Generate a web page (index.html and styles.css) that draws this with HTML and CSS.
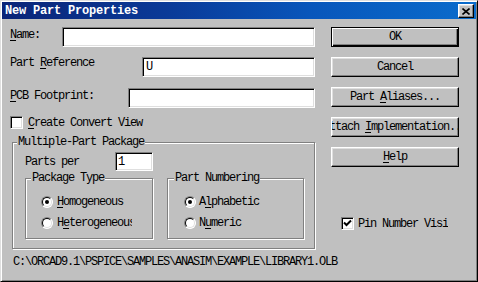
FILE: index.html
```html
<!DOCTYPE html>
<html>
<head>
<meta charset="utf-8">
<link rel="stylesheet" href="styles.css">
</head>
<body>
<div class="window">
  <div class="titlebar">
    <span class="title">New Part Properties</span>
    <span class="close"><svg width="8" height="7" viewBox="0 0 8 7"><path d="M0.5 0.5L7.5 6.5M7.5 0.5L0.5 6.5" stroke="#000" stroke-width="1.6" fill="none"/></svg></span>
  </div>
  <div class="body">
    <div class="left">
      <div class="field">
        <span class="lbl w-name"><u>N</u>ame:</span>
        <div class="input"></div>
      </div>
      <div class="field f-ref">
        <span class="lbl w-ref">Part <u>R</u>eference</span>
        <div class="input">U</div>
      </div>
      <div class="field f-pcb">
        <span class="lbl w-pcb"><u>P</u>CB Footprint:</span>
        <div class="input"></div>
      </div>
      <div class="check-row convert">
        <span class="checkbox"></span>
        <span><u>C</u>reate Convert View</span>
      </div>
      <fieldset class="group outer">
        <legend>Multiple-Part Package</legend>
        <div class="parts-row">
          <span class="lbl w-parts">Parts per</span>
          <div class="input small">1</div>
        </div>
        <div class="subgroups">
          <fieldset class="group sub pkg">
            <legend>Package Type</legend>
            <div class="radio-row first"><span class="radio on"></span><span><u>H</u>omogeneous</span></div>
            <div class="radio-row second"><span class="radio"></span><span class="clip-het">H<u>e</u>terogeneous</span></div>
          </fieldset>
          <fieldset class="group sub num">
            <legend>Part Numbering</legend>
            <div class="radio-row first"><span class="radio on"></span><span>A<u>l</u>phabetic</span></div>
            <div class="radio-row second"><span class="radio"></span><span>N<u>u</u>meric</span></div>
          </fieldset>
        </div>
      </fieldset>
      <div class="path">C:\ORCAD9.1\PSPICE\SAMPLES\ANASIM\EXAMPLE\LIBRARY1.OLB</div>
    </div>
    <div class="right">
      <div class="btn default"><span>OK</span></div>
      <div class="btn"><span>Cancel</span></div>
      <div class="btn"><span>Part <u>A</u>liases...</span></div>
      <div class="btn"><span>Attach <u>I</u>mplementation...</span></div>
      <div class="btn"><span><u>H</u>elp</span></div>
      <div class="check-row pin">
        <span class="checkbox checked"><svg width="9" height="9" viewBox="0 0 9 9"><path d="M1 3.5L3.5 6L8 1.5" stroke="#000" stroke-width="2" fill="none"/></svg></span>
        <span class="clip-pin">Pin Number Visible</span>
      </div>
    </div>
  </div>
</div>
</body>
</html>
```

FILE: styles.css
```css
* { box-sizing: border-box; }
html, body { margin: 0; padding: 0; }
body {
  width: 478px;
  height: 282px;
  overflow: hidden;
  background: #c0c0c0;
  font-family: "Liberation Mono", "DejaVu Sans Mono", monospace;
  font-size: 12px;
  line-height: 14px;
  letter-spacing: -1.2px;
  color: #000;
}
u { text-decoration: underline; text-underline-offset: 2px; }

.window {
  width: 478px;
  height: 282px;
  background: #c0c0c0;
  border: 1px solid;
  border-color: #dfdfdf #000 #000 #dfdfdf;
  box-shadow: inset 1px 1px #fff, inset -1px -1px #808080;
  padding: 1px;
  display: flex;
  flex-direction: column;
}

.titlebar {
  height: 17px;
  flex: none;
  display: flex;
  align-items: flex-start;
  justify-content: space-between;
  background: linear-gradient(90deg, #0a2478 0%, #0a3a98 35%, #0856bb 65%, #0a6ccc 100%);
  padding: 0 2px 0 3px;
}
.title {
  color: #fff;
  font-weight: bold;
  letter-spacing: -0.2px;
  margin-top: 2px;
}
.close {
  width: 16px;
  height: 14px;
  margin-top: 2px;
  background: #c0c0c0;
  border: 1px solid;
  border-color: #fff #000 #000 #fff;
  box-shadow: inset -1px -1px #808080, inset 1px 1px #dfdfdf;
  display: flex;
  align-items: center;
  justify-content: center;
}

.body {
  flex: 1;
  display: flex;
  padding: 8px 0 0 8px;
}
.left {
  width: 305px;
  display: flex;
  flex-direction: column;
}
.right {
  width: 128px;
  margin-left: 16px;
  display: flex;
  flex-direction: column;
}

.field {
  display: flex;
  height: 20px;
  align-items: flex-start;
}
.f-ref { margin-top: 10px; }
.f-pcb { margin-top: 11px; }
.lbl { flex: none; white-space: nowrap; }
.w-name { width: 52px; padding-top: 1px; }
.w-ref { width: 132px; margin-top: -1px; }
.w-pcb { width: 118px; margin-top: 1px; }

.input {
  flex: 1;
  height: 20px;
  background: #fff;
  border: 1px solid;
  border-color: #808080 #fff #fff #808080;
  box-shadow: inset 1px 1px #000, inset -1px -1px #dfdfdf;
  padding: 2px 3px;
  white-space: nowrap;
}
.input.small {
  flex: none;
  width: 38px;
  height: 19px;
  padding: 2px 2px;
}

.check-row {
  display: flex;
  align-items: center;
  height: 13px;
}
.convert { margin-top: 8px; gap: 5px; }
.checkbox {
  flex: none;
  width: 13px;
  height: 13px;
  background: #fff;
  border: 1px solid;
  border-color: #808080 #fff #fff #808080;
  box-shadow: inset 1px 1px #000, inset -1px -1px #dfdfdf;
  display: flex;
  align-items: center;
  justify-content: center;
}

.group {
  margin: 0;
  padding: 0;
  min-width: 0;
  border: 1px solid #808080;
  box-shadow: 1px 1px 0 #fff, inset 1px 1px 0 #fff;
}
.group legend {
  padding: 0 1px;
  background: #c0c0c0;
  line-height: 14px;
}
.outer {
  margin: 6px 0 0 2px;
  width: 303px;
  height: 114px;
}
.outer > legend { margin-left: 4px; }

.parts-row {
  display: flex;
  margin: 3px 0 0 12px;
  height: 19px;
}
.w-parts { width: 90px; padding-top: 3px; }

.subgroups {
  display: flex;
  margin-left: 12px;
}
.sub { height: 68px; }
.pkg { width: 128px; }
.pkg > legend { margin-left: 5px; }
.num { width: 137px; margin-left: 14px; }
.num > legend { margin-left: 6px; }

.radio-row {
  display: flex;
  align-items: center;
  height: 14px;
  white-space: nowrap;
}
.radio-row.first { margin-top: 10px; }
.radio-row.second { margin-top: 7px; }
.pkg .radio-row { padding-left: 15px; gap: 4px; }
.num .radio-row { padding-left: 16px; gap: 3px; }

.radio {
  flex: none;
  position: relative;
  width: 12px;
  height: 12px;
  border-radius: 50%;
  border: 1px solid;
  border-color: #808080 #fff #fff #808080;
  background: #fff;
}
.radio::before {
  content: "";
  position: absolute;
  inset: 0;
  border-radius: 50%;
  border: 1px solid;
  border-color: #000 #dfdfdf #dfdfdf #000;
}
.radio.on::after {
  content: "";
  position: absolute;
  left: 3px;
  top: 3px;
  width: 4px;
  height: 4px;
  border-radius: 50%;
  background: #000;
}
.clip-het {
  display: block;
  width: 75px;
  overflow: hidden;
}

.path {
  margin-top: 6px;
  padding-left: 3px;
  white-space: nowrap;
}

.btn {
  height: 20px;
  margin-bottom: 10px;
  border: 1px solid;
  border-color: #fff #000 #000 #fff;
  box-shadow: inset -1px -1px #808080, inset 1px 1px #dfdfdf;
  display: flex;
  align-items: center;
  justify-content: center;
  overflow: hidden;
  white-space: nowrap;
}
.btn span { flex: none; }
.btn.default {
  border-color: #000;
  box-shadow: inset 1px 1px #fff, inset -1px -1px #000, inset -2px -2px #808080;
}

.pin {
  margin-top: 40px;
  margin-left: 10px;
  gap: 4px;
}
.clip-pin {
  display: block;
  width: 90px;
  overflow: hidden;
  white-space: nowrap;
}
```
